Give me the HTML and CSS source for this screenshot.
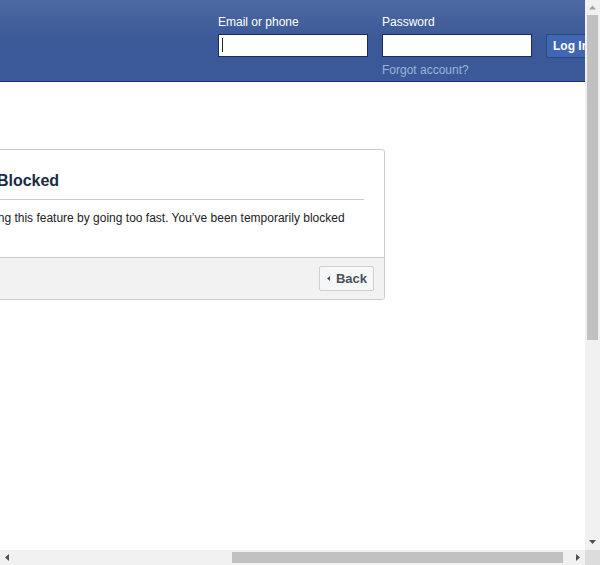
FILE: index.html
```html
<!DOCTYPE html>
<html lang="en">
<head>
<meta charset="utf-8">
<title>Facebook</title>
<link rel="stylesheet" href="styles.css">
</head>
<body>
<div class="window">
  <div class="viewport">
    <div class="page">
      <header class="topbar">
        <div class="topbar-inner">
          <form class="login">
            <div class="field">
              <label class="field-label" for="email">Email or phone</label>
              <input class="field-input field-input--caret" id="email" type="text">
            </div>
            <div class="field">
              <label class="field-label" for="pass">Password</label>
              <input class="field-input" id="pass" type="password">
              <a class="forgot" href="#">Forgot account?</a>
            </div>
            <div class="field field--button">
              <button class="login-btn" type="button">Log In</button>
            </div>
          </form>
        </div>
      </header>
      <main class="content">
        <section class="card">
          <div class="card-body">
            <h2 class="card-title">You’re Temporarily Blocked</h2>
            <p class="card-text">It looks like you were misusing this feature by going too fast. You’ve been temporarily blocked from using it.</p>
          </div>
          <div class="card-footer">
            <a class="back-btn" href="#"><svg class="back-icon" width="3" height="5" viewBox="0 0 3 5" aria-hidden="true"><path d="M3 0V5L0 2.5Z" fill="#4b4f56"/></svg>Back</a>
          </div>
        </section>
      </main>
    </div>
  </div>

  <div class="vbar">
    <div class="sb-btn"><svg width="15" height="15" viewBox="0 0 15 15"><path d="M4 9.5H11L7.5 5.5Z" fill="#a3a3a3"/></svg></div>
    <div class="vtrack"><div class="vthumb"></div></div>
    <div class="sb-btn"><svg width="15" height="15" viewBox="0 0 15 15"><path d="M4 5H11L7.5 9Z" fill="#505050"/></svg></div>
  </div>

  <div class="hbar">
    <div class="sb-btn"><svg width="15" height="15" viewBox="0 0 15 15"><path d="M9 4V11L5 7.5Z" fill="#505050"/></svg></div>
    <div class="htrack"><div class="hthumb"></div></div>
    <div class="sb-btn"><svg width="15" height="15" viewBox="0 0 15 15"><path d="M6 4V11L10 7.5Z" fill="#505050"/></svg></div>
  </div>

  <div class="sb-corner"></div>
</div>
</body>
</html>
```

FILE: styles.css
```css
html, body {
  margin: 0;
  padding: 0;
  overflow: hidden;
}

body {
  font-family: "Liberation Sans", Arial, Helvetica, sans-serif;
  font-size: 12px;
  color: #1d2129;
  background: #fff;
}

/* ---------- browser window with scrollbars ---------- */
.window {
  width: 600px;
  height: 565px;
  display: grid;
  grid-template-columns: 585px 15px;
  grid-template-rows: 550px 15px;
  overflow: hidden;
}

.viewport {
  overflow: hidden;
  background: #fff;
}

/* page scrolled 384px to the right */
.page {
  width: 981px;
  min-height: 880px;
  margin-left: -384px;
}

.vbar {
  display: flex;
  flex-direction: column;
  background: #f1f1f1;
}

.hbar {
  display: flex;
  background: #f1f1f1;
}

.sb-btn {
  flex: none;
  width: 15px;
  height: 15px;
}

.sb-btn svg {
  display: block;
}

.vtrack {
  flex: 1;
  padding: 0 2px;
}

.vthumb {
  height: 325px;
  background: #c1c1c1;
}

.htrack {
  flex: 1;
  padding: 2px 0;
}

.hthumb {
  width: 331px;
  height: 11px;
  margin-left: 217px;
  background: #c1c1c1;
}

.sb-corner {
  background: #dcdcdc;
}

/* ---------- top bar ---------- */
.topbar {
  height: 81px;
  border-bottom: 1px solid #133783;
  background: linear-gradient(#4e69a2, #3b5998 50%);
}

.topbar-inner {
  box-sizing: border-box;
  width: 981px;
  padding: 14px 1px 0 0;
  display: flex;
  justify-content: flex-end;
}

.login {
  display: flex;
  gap: 14px;
  margin: 0;
}

.field {
  display: flex;
  flex-direction: column;
  align-items: flex-start;
}

.field-label {
  color: #fff;
  font-size: 12px;
  line-height: 16px;
  margin-bottom: 4px;
}

.field-input {
  box-sizing: border-box;
  width: 150px;
  height: 23px;
  margin: 0;
  padding: 3px;
  border: 1px solid #1d2a5b;
  background: #fff;
  font: 11px "Liberation Sans", Arial, sans-serif;
  outline: none;
}

.field-input--caret {
  background: #fff linear-gradient(#1d2129, #1d2129) no-repeat 3px 3px / 1px 14px;
}

.forgot {
  margin-top: 5px;
  color: #9cb4d8;
  font-size: 12px;
  line-height: 16px;
  text-decoration: none;
}

.field--button {
  padding-top: 20px;
}

.login-btn {
  box-sizing: border-box;
  height: 24px;
  margin: 0;
  padding: 1px 6px 0;
  border: 1px solid #29487d;
  border-radius: 2px;
  background: #4267b2;
  color: #fff;
  font: bold 12px "Liberation Sans", Arial, sans-serif;
  line-height: 21px;
  white-space: nowrap;
}

/* ---------- card ---------- */
.content {
  padding: 67px 0 0 2px;
}

.card {
  box-sizing: border-box;
  width: 555px;
  margin: 0 auto;
  border: 1px solid #ccc;
  border-radius: 3px;
  background: #fff;
  overflow: hidden;
}

.card-body {
  padding: 21px 20px 15px 18px;
}

.card-title {
  margin: 0;
  padding-bottom: 8px;
  border-bottom: 1px solid #ccc;
  color: #1c2a47;
  font-size: 16px;
  font-weight: bold;
  line-height: 20px;
}

.card-text {
  margin: 10px 0 0;
  line-height: 16px;
  color: #1d2129;
}

.card-footer {
  display: flex;
  justify-content: flex-end;
  padding: 8px 10px;
  border-top: 1px solid #ccc;
  background: #f2f2f2;
}

.back-btn {
  box-sizing: border-box;
  display: inline-flex;
  align-items: center;
  height: 25px;
  padding: 0 6px 0 7px;
  border: 1px solid #ced0d4;
  border-radius: 2px;
  background: #f6f7f9;
  color: #4b4f56;
  font-size: 13px;
  font-weight: bold;
  text-decoration: none;
}

.back-icon {
  display: block;
  margin-right: 6px;
}
```
